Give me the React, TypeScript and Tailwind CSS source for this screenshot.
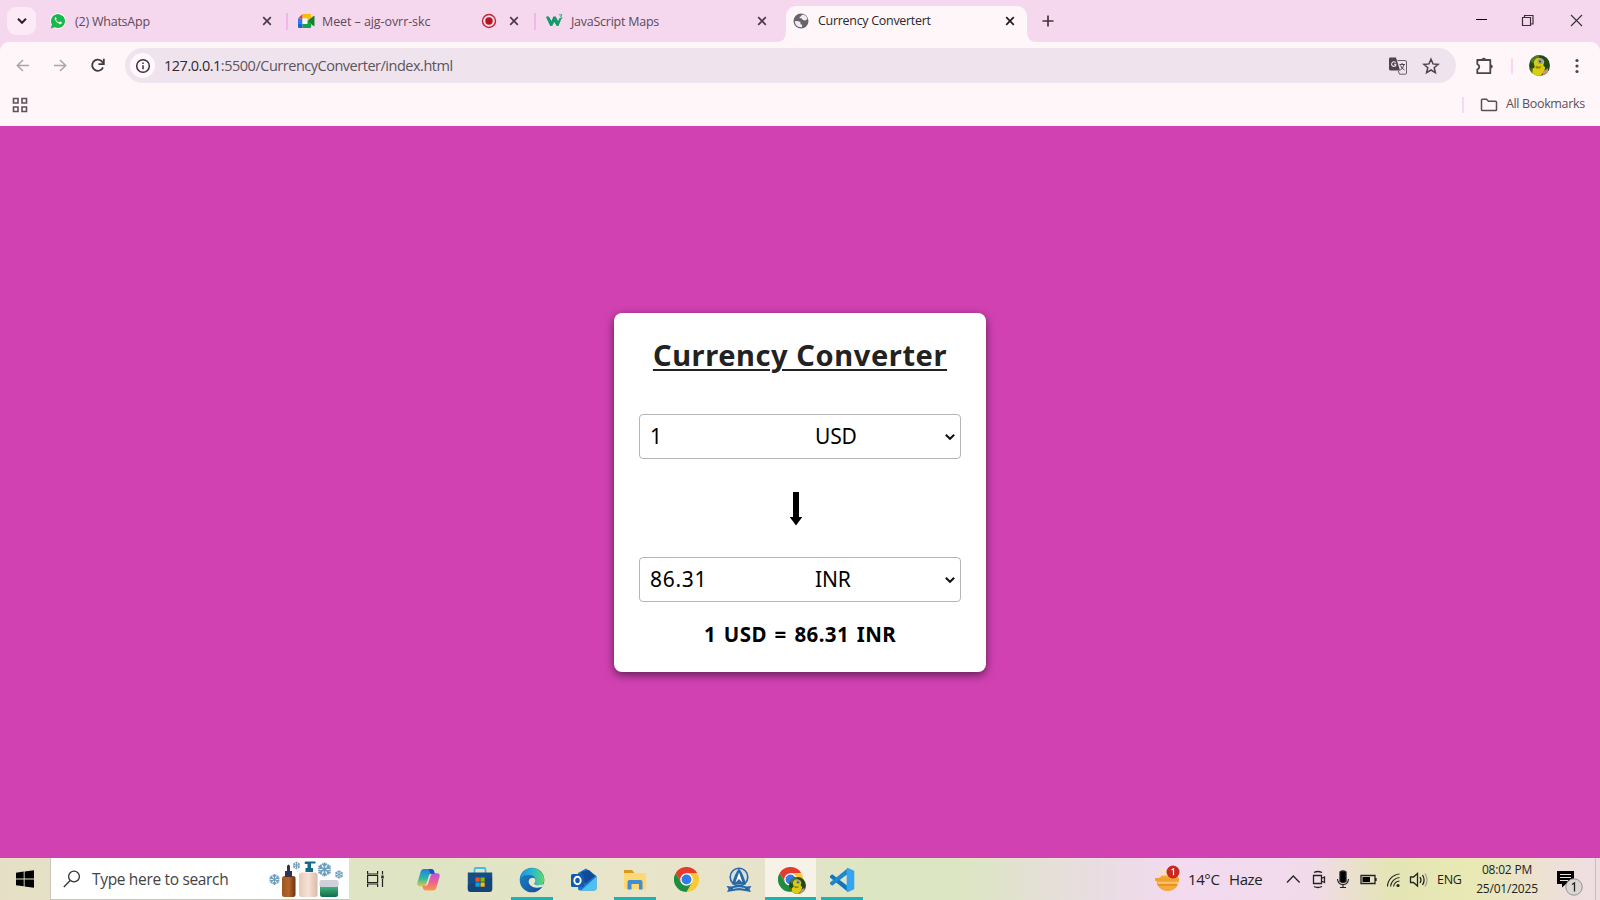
import type { ReactNode } from "react";

const UI = "font-['Open_Sans','Noto_Sans',sans-serif]";

function Close({ dark = false }: { dark?: boolean }) {
  return (
    <svg viewBox="0 0 16 16" className="block h-4 w-4 shrink-0">
      <path d="M4.2 4.2l7.6 7.6M11.8 4.2l-7.6 7.6" stroke={dark ? "#241a22" : "#4c3a48"} strokeWidth="1.7" fill="none" />
    </svg>
  );
}

function Chrome({ size = 25 }: { size?: number }) {
  return (
    <svg viewBox="0 0 48 48" width={size} height={size} className="block">
      <path d="M24 12H44.8A24 24 0 0 0 3.2 12L13.6 30Z" fill="#e33b2e" />
      <path d="M34.4 30 24 48A24 24 0 0 0 44.8 12H24Z" fill="#fcc934" />
      <path d="M13.6 30 3.2 12A24 24 0 0 0 24 48L34.4 30Z" fill="#1e8e3e" />
      <circle cx="24" cy="24" r="12" fill="#fff" />
      <circle cx="24" cy="24" r="9.5" fill="#2f7de9" />
    </svg>
  );
}

function Avatar({ size }: { size: number }) {
  return (
    <svg viewBox="0 0 22 22" width={size} height={size} className="block">
      <defs>
        <clipPath id="av">
          <circle cx="11" cy="11" r="11" />
        </clipPath>
      </defs>
      <g clipPath="url(#av)">
        <rect width="22" height="22" fill="#26491a" />
        <path d="M0 5l8-5h4L4 9z" fill="#4c7a2c" />
        <path d="M5 8q1-4.500 5-5 5 .5 6 4l-1 4 2 2-1 4-4 5H6L2 18l2-4 2-1z" fill="#dccb13" />
        <circle cx="12" cy="6.500" r="3" fill="#9fa38a" />
        <circle cx="11.500" cy="6.800" r="1.100" fill="#3e4a2a" />
        <path d="M7 11q3 2 6 .500l-1 2q-2 1.500-5 0z" fill="#8b8a0c" />
        <path d="M15 17l5-3v6l-6 2z" fill="#c9937a" />
        <path d="M0 13l4 2-1 7H0z" fill="#526c14" />
      </g>
    </svg>
  );
}

function Snow({ x, y, r }: { x: number; y: number; r: number }) {
  return (
    <g transform={`translate(${x} ${y}) scale(${r / 6})`} stroke="#6f9fbe" strokeWidth="1.500" fill="none">
      {[0, 60, 120].map((a) => (
        <path key={a} transform={`rotate(${a})`} d="M0-6V6M-2-5L0-3L2-5M-2 5L0 3L2 5" />
      ))}
    </g>
  );
}

function TabBar() {
  return (
    <div className="flex h-[42px] items-start bg-[#f6d8ee]">
      <div className="ml-[7px] mt-[7px] flex h-7 w-[29px] items-center justify-center rounded-[9px] bg-[#fdeaf7]">
        <svg viewBox="0 0 12 12" className="h-3 w-3">
          <path d="M2 3.800l4 4 4-4" stroke="#2b2029" strokeWidth="2" fill="none" />
        </svg>
      </div>
      <div className="mt-[7px] flex h-7 w-[250px] items-center pl-[14px]">
        <svg viewBox="0 0 16 16" className="h-4 w-4 shrink-0">
          <circle cx="8" cy="8" r="7.800" fill="#fff" />
          <path d="M.8 15.400l1.100-3.800A7 7 0 1 1 4.700 14.300z" fill="#19b84a" />
          <path d="M5.300 4.300q-.9.8-.4 2.300 1.300 3.500 4.800 4.600 1.500.2 2-.9.300-1-.1-1.200l-1.500-.7q-.4-.1-.7.300-.5.900-1 .6-1.600-.7-2.400-2.200-.1-.3.500-.9.200-.3 0-.6l-.6-1.300q-.2-.3-.6 0z" fill="#fff" />
        </svg>
        <span className="ml-[9px] w-[184px] pt-[2px] text-[12.500px] tracking-[-0.220px] text-[#5d4a59]">(2) WhatsApp</span>
        <Close />
      </div>
      <div className="mt-[13px] h-[17px] w-[2px] bg-[#f3b5ea]" />
      <div className="mt-[7px] flex h-7 w-[246px] items-center pl-[10px]">
        <svg viewBox="0 0 17 14" className="h-[14px] w-[17px] shrink-0">
          <path d="M0 4.500L4.500 0V4.500z" fill="#e2382c" />
          <path d="M4.500 0H12q1.200 0 1.200 1.200V6L9.500 7V4.500h-5z" fill="#fbbc04" />
          <path d="M0 4.500h4.500V10H0z" fill="#2b7cf0" />
          <path d="M4.500 4.500h5V10h-5z" fill="#fdf3fa" />
          <path d="M0 10h4.500v4H1.200Q0 14 0 12.800z" fill="#1a62d6" />
          <path d="M4.500 10h5V7l3.700 3v2.800q0 1.200-1.200 1.200H4.500z" fill="#18a047" />
          <path d="M9.500 7l6-5q1-.6 1 .5v9q0 1-1 .5z" fill="#118336" />
        </svg>
        <span className="ml-[7px] w-[152px] pt-[2px] text-[12.500px] tracking-[-0.080px] text-[#5d4a59]">Meet – ajg-ovrr-skc</span>
        <svg viewBox="0 0 16 16" className="mr-[9px] ml-[7px] h-4 w-4 shrink-0">
          <circle cx="8" cy="8" r="6.500" stroke="#b92a31" strokeWidth="1.400" fill="none" />
          <circle cx="8" cy="8" r="3.700" fill="#b3151d" />
        </svg>
        <Close />
      </div>
      <div className="mt-[13px] h-[17px] w-[2px] bg-[#f3b5ea]" />
      <div className="mt-[7px] flex h-7 w-[240px] items-center pl-[10px]">
        <svg viewBox="0 0 17 14" className="h-[14px] w-[17px] shrink-0">
          <path d="M0 3q1.500-1.500 3-.3L5.500 7l1.800-4.600h2.500L12 7l2-3.500 1.500 1-3 7.500h-1.800L8.300 8 6.200 12H4.200z" fill="#139a6d" />
          <path d="M13 .8h3l-1.500 1.700q1.700.2 1.500 1.500-.3 1.500-2.600.9" stroke="#35a680" fill="none" />
        </svg>
        <span className="ml-[8px] w-[183px] pt-[2px] text-[12.500px] tracking-[-0.250px] text-[#5d4a59]">JavaScript Maps</span>
        <Close />
      </div>
      <svg viewBox="0 0 10 10" className="mt-8 h-[10px] w-[10px] shrink-0">
        <path d="M0 10Q10 10 10 0V10z" fill="#fff6fa" />
      </svg>
      <div className="mt-[6px] flex h-9 w-[241px] items-center rounded-t-[10px] bg-[#fff6fa] pb-[6px] pl-[7px]">
        <svg viewBox="0 0 16 16" className="h-4 w-4 shrink-0">
          <circle cx="8" cy="8" r="7.500" fill="#66646a" />
          <path d="M9.200 1.800q-1 .2-1 1.400-1.900.1-1.700 1.900l2.300.3 1 1.700 2.400.3L14.500 6Q14 3 11 1.700zM2 8l4 .2 1.600 1.300-.2 1.400 1.800 1.100-.3 2.200Q3.500 14.500 2 10z" fill="#f4eaf1" />
          <path d="M11 9.500h3q-.8 2.500-2.600 3.500z" fill="#66646a" />
        </svg>
        <span className="ml-[9px] w-[184px] pt-px text-[12.500px] tracking-[-0.300px] text-[#2d262c]">Currency Convertert</span>
        <Close dark />
      </div>
      <svg viewBox="0 0 10 10" className="mt-8 h-[10px] w-[10px] shrink-0">
        <path d="M10 10Q0 10 0 0V10z" fill="#fff6fa" />
      </svg>
      <svg viewBox="0 0 16 16" className="mt-[13px] ml-[3px] h-4 w-4 shrink-0">
        <path d="M8 2.500v11M2.500 8h11" stroke="#46343f" strokeWidth="1.700" />
      </svg>
      <svg viewBox="0 0 120 16" className="mt-[13px] mr-[12px] ml-auto h-4 w-[120px] shrink-0" fill="none" stroke="#3a3038">
        <path d="M8 6.500h11" stroke="#000" />
        <path d="M54.500 4.500h8v8h-8zM56.500 4.500v-2h8.500v8.500h-2.500" strokeWidth="1.200" />
        <path d="M103 2l11 11M114 2l-11 11" strokeWidth="1.100" />
      </svg>
    </div>
  );
}

function Toolbar() {
  return (
    <div className="bg-[#f6d8ee]">
      <div className="flex h-[84px] flex-col rounded-t-[9px] bg-[#fff6fa] pt-[6px]">
        <div className="flex h-[35px] items-center">
          <svg viewBox="0 0 125 35" className="h-[35px] w-[125px] shrink-0" fill="none" strokeWidth="1.500">
            <path d="M29 17.500H17.500M23 12l-5.700 5.500L23 23M54 17.500h11.500M60 12l5.700 5.500L60 23" stroke="#aca2a9" />
            <path d="M103 19.300A5.600 5.600 0 1 1 101.500 13l1.500 2" stroke="#45373f" strokeWidth="1.800" />
            <path d="M103.800 10.800v5.300h-5.300" stroke="#45373f" strokeWidth="1.800" />
          </svg>
          <div className="flex h-[35px] w-[1331px] items-center rounded-full bg-[#efe4ed] pl-[5px]">
            <div className="flex h-[25px] w-[25px] items-center justify-center rounded-full bg-[#fff8fc]">
              <svg viewBox="0 0 16 16" className="h-4 w-4" fill="none" stroke="#3b2f38">
                <circle cx="8" cy="8" r="6.300" strokeWidth="1.500" />
                <path d="M8 7.200v4M8 4.500v1.500" strokeWidth="1.500" />
              </svg>
            </div>
            <span className="ml-[9px] pt-px text-[14.500px] tracking-[-0.480px] text-[#5d535c]">
              <span className="text-[#302a30]">127.0.0.1</span>:5500/CurrencyConverter/index.html
            </span>
            <svg viewBox="0 0 18 18" className="mr-[15px] ml-auto h-[18px] w-[18px]">
              <path d="M1 .5h6l4 13H2Q0 13.500 0 12V2Q0 .5 1 .5z" fill="#51434d" />
              <path d="M8.500 3.500H16q1.500 0 1.500 1.500v11q0 1.200-1.200 1.200H10.500L9.300 14" fill="none" stroke="#6b5f68" />
              <path d="M6.800 5.700Q5 4 3.200 5.500q-1.400 1.600 0 3.300Q5 10.200 6.800 8.500V7.300H5" stroke="#eee0eb" fill="none" strokeWidth="1.100" />
              <path d="M10.500 7.500h5.500M13 6v1.500M15 7.500q-.7 3.500-4 6M11.500 8.500q1 3 4 4.500" stroke="#54464f" fill="none" />
            </svg>
            <svg viewBox="0 0 18 18" className="mr-[16px] h-[18px] w-[18px]" fill="none" stroke="#51434d" strokeWidth="1.500">
              <path d="M9 2.200l2 4.700 5.100.5-3.900 3.300 1.200 5L9 13l-4.400 2.700 1.200-5L1.900 7.400 7 6.900z" />
            </svg>
          </div>
          <svg viewBox="0 0 20 20" className="ml-[19px] h-5 w-5" fill="none" stroke="#51434d" strokeWidth="1.800">
            <path d="M2.300 4H15.300V17.200H2.300V13.500q2-.9 2-2.700t-2-2.700z" strokeLinejoin="round" />
            <path d="M6.600 4Q6.600 1.700 8.800 1.700T11 4zM15.300 8.500Q17.800 8.500 17.800 10.600T15.300 12.700z" fill="#51434d" stroke="none" />
          </svg>
          <div className="ml-[16px] h-4 w-[2px] bg-[#fad8f1]" />
          <div className="ml-[16px]"><Avatar size={21} /></div>
          <svg viewBox="0 0 4 16" className="ml-[25px] h-4 w-1" fill="#51434d">
            <circle cx="2" cy="2.500" r="1.600" /><circle cx="2" cy="8" r="1.600" /><circle cx="2" cy="13.500" r="1.600" />
          </svg>
        </div>
        <div className="flex h-[43px] items-center">
          <svg viewBox="0 0 16 16" className="ml-3 h-4 w-4" fill="none" stroke="#5f5059" strokeWidth="1.600">
            <path d="M1.500 1.500h4.500V6H1.500zM10 1.500h4.500V6H10zM1.500 10h4.500v4.500H1.500zM10 10h4.500v4.500H10z" />
          </svg>
          <div className="ml-auto h-4 w-[2px] bg-[#fad8f1]" />
          <svg viewBox="0 0 18 14" className="ml-4 h-[14px] w-[18px]" fill="none" stroke="#5b4c56" strokeWidth="1.500">
            <path d="M1.500 2Q1.500 1.200 2.300 1.200H6.500l2 2h7q1 0 1 1v7.500q0 .9-.9.900H2.400q-.9 0-.9-.9z" />
          </svg>
          <span className="ml-2 w-[94px] text-[12.500px] tracking-[-0.350px] whitespace-nowrap text-[#5d4f59]">All Bookmarks</span>
        </div>
      </div>
    </div>
  );
}

function Field({ value, unit }: { value: string; unit: string }) {
  return (
    <div className="flex h-[45px] w-[322px] shrink-0 items-center rounded-[4px] border-[1.500px] border-[#b5b5b5] bg-white text-[21px] text-black">
      <span className="ml-[10px] w-[165px] tracking-[0.700px]">{value}</span>
      <span className="tracking-[-0.200px]">{unit}</span>
      <svg viewBox="0 0 12 8" className="mr-[4px] ml-auto h-2 w-3">
        <path d="M1.800 1.800L6 5.800l4.200-4" stroke="#111" strokeWidth="2" fill="none" />
      </svg>
    </div>
  );
}

function Card() {
  return (
    <div className="mt-px flex h-[359px] w-[372px] flex-col items-center rounded-[8px] bg-white pt-[22px] font-['Noto_Sans',sans-serif] shadow-[0_3px_10px_rgba(0,0,0,0.55)]">
      <h1 className="h-[79px] text-[29px] leading-[40px] font-bold tracking-[0.600px] whitespace-nowrap text-[#222] underline decoration-2 underline-offset-[3px]">
        Currency Converter
      </h1>
      <Field value="1" unit="USD" />
      <svg viewBox="0 0 14 34" className="mt-[33px] mr-[8px] mb-[31px] h-[34px] w-[14px] shrink-0">
        <path d="M4 0h6v25h3.300L7 33.500.7 25H4z" fill="#000" />
      </svg>
      <Field value="86.31" unit="INR" />
      <div className="mt-[17px] text-[20.500px] leading-[30px] font-bold tracking-[0.400px] [word-spacing:2px] whitespace-nowrap text-black">1 USD = 86.31 INR</div>
    </div>
  );
}

function TaskItem({ children, w, open = false, active = false }: { children: ReactNode; w: string; open?: boolean; active?: boolean }) {
  return (
    <div className={`flex h-[42px] shrink-0 flex-col items-center ${w} ${active ? "bg-[#f6f2e8]" : ""}`}>
      <div className="flex h-[39px] items-center pt-[4px]">{children}</div>
      <div className={`h-[3px] ${active ? "w-full" : "w-[42px]"} ${open ? "bg-[#1fb2b5]" : ""}`} />
    </div>
  );
}

function SearchArt() {
  return (
    <svg viewBox="0 0 76 40" className="h-10 w-[76px] shrink-0">
      <defs>
        <linearGradient id="br"><stop stopColor="#9d5520" /><stop offset=".5" stopColor="#b4662b" /><stop offset="1" stopColor="#6a3311" /></linearGradient>
        <linearGradient id="cr"><stop stopColor="#e5c9b7" /><stop offset=".5" stopColor="#f7e1d5" /><stop offset="1" stopColor="#dcb9a8" /></linearGradient>
        <linearGradient id="gr" x2="0" y2="1"><stop stopColor="#62d39b" /><stop offset="1" stopColor="#0d6e4a" /></linearGradient>
      </defs>
      <Snow x={5.5} y={20.5} r={5.5} />
      <Snow x={27.5} y={6.5} r={3.800} />
      <Snow x={55.5} y={10.5} r={7} />
      <Snow x={70} y={15.5} r={4.200} />
      <rect x="13" y="17" width="13.500" height="21" rx="2.500" fill="url(#br)" />
      <path d="M16 18v-6h2V7q1.500-3 3 0v5H23v6z" fill="#33334f" />
      <rect x="30" y="13.500" width="18.500" height="24.500" rx="2.500" fill="url(#cr)" />
      <path d="M36.500 13V9h2V5h-2.700V2.500H46.500V4.500H42v4.500h2V13z" fill="#126b86" />
      <rect x="51" y="22" width="18" height="16" rx="2.500" fill="url(#gr)" />
      <rect x="50.500" y="21" width="19" height="7" rx="2" fill="#cfd0d8" />
    </svg>
  );
}

function Taskbar() {
  return (
    <div className="flex h-[42px] items-start bg-[linear-gradient(90deg,#e6dfc6_0,#dfe4c4_22%,#dfe4c4_28%,#e8e5ca_38%,#e6e3ca_48%,#dde6c3_54%,#dde6c3_60%,#e8dde0_68%,#f3daf0_74%,#f1dbea_82%,#e4e5b4_87%,#e9e9b4_92%,#eedfdc_98%,#efdee1_100%)]">
      <div className="flex h-[42px] w-[50px] shrink-0 items-center justify-center">
        <svg viewBox="0 0 18 18" className="h-[18px] w-[18px]"><path d="M0 2.700L7.700 1.600V8.500H0zM8.600 1.500L18 .2V8.500H8.600zM0 9.400h7.700v6.900L0 15.300zM8.600 9.400H18v8.400L8.600 16.500z" /></svg>
      </div>
      <div className="flex h-[42px] w-[299px] shrink-0 items-center border-b border-l border-[#c4c7ba] bg-white pl-3">
        <svg viewBox="0 0 18 18" className="h-[18px] w-[18px]" fill="none" stroke="#333" strokeWidth="1.300"><circle cx="11" cy="6.500" r="5.400" /><path d="M7.200 10.500L.8 17" /></svg>
        <span className="ml-[11px] w-[177px] pt-[2px] text-[15.500px] tracking-[-0.330px] whitespace-nowrap text-[#444]">Type here to search</span>
        <SearchArt />
      </div>
      <div className="flex h-[42px] w-[53px] items-center justify-center">
        <svg viewBox="0 0 19 18" className="h-[18px] w-[19px]" fill="none" stroke="#222" strokeWidth="1.200"><path d="M1.600 1v3h10V1M1.600 17v-3h10v3M1.600 5.500h10v7h-10zM16.500 1v3.500M16.500 9v8" /><path d="M16.500 5.500v3" strokeWidth="2.400" /></svg>
      </div>
      <TaskItem w="w-[52px]">
        <svg viewBox="0 0 26 26" width="25" height="25">
          <defs>
            <linearGradient id="c1" x2="0" y2="1"><stop stopColor="#1f7fe0" /><stop offset=".55" stopColor="#2fb8a8" /><stop offset="1" stopColor="#e7c83c" /></linearGradient>
            <linearGradient id="c2" x2="0" y2="1"><stop stopColor="#b05be6" /><stop offset=".5" stopColor="#ee5f93" /><stop offset="1" stopColor="#fb9a46" /></linearGradient>
          </defs>
          <path d="M8 2h8q2 0 2.800 2.300L19.500 7H16q-2 0-2.600 2l-2.600 8.500Q10 20 7.500 20H4Q.6 20 1.500 16L5 4.500Q5.800 2 8 2z" fill="url(#c1)" />
          <path d="M18 24.500h-8q-2 0-2.800-2.300L6.500 19.500H10q2 0 2.600-2L15.200 9Q16 6.500 18.500 6.500H22q3.400 0 2.500 4L21 22q-.8 2.500-3 2.500z" fill="url(#c2)" />
          <path d="M13 2h3q2 0 2.800 2.300L19.500 7H15z" fill="#1d4fc0" />
        </svg>
      </TaskItem>
      <TaskItem w="w-[51px]">
        <svg viewBox="0 0 26 26" width="26" height="26">
          <path d="M7.500 6V2.500Q7.500 1 9 1h8q1.500 0 1.500 1.500V6" stroke="#46bde0" strokeWidth="1.800" fill="none" />
          <path d="M.8 5.500h24.400V22q0 3-3 3H3.800q-3 0-3-3z" fill="#174d86" /><path d="M.8 18l24.400-8V22q0 3-3 3H3.800q-3 0-3-3z" fill="#143f70" opacity=".6" />
          <path d="M8.500 10.500h4.200v4.200H8.500z" fill="#f25022" /><path d="M13.500 10.500h4.200v4.200h-4.200z" fill="#7fba00" /><path d="M8.500 15.500h4.200v4.200H8.500z" fill="#00a4ef" /><path d="M13.500 15.500h4.200v4.200h-4.200z" fill="#ffb900" />
        </svg>
      </TaskItem>
      <TaskItem w="w-[53px]" open>
        <svg viewBox="0 0 26 26" width="26" height="26">
          <defs>
            <linearGradient id="e1"><stop stopColor="#1f8fdc" /><stop offset=".5" stopColor="#2ab7cf" /><stop offset="1" stopColor="#62d86a" /></linearGradient>
            <linearGradient id="e2" x2="1" y2="1"><stop stopColor="#1b87cc" /><stop offset="1" stopColor="#134a92" /></linearGradient>
          </defs>
          <circle cx="13" cy="13" r="12.300" fill="url(#e2)" />
          <path d="M.8 12A12.300 12.300 0 0 1 25.300 12.500q0 5.800-6 5.800-4.300 0-4.300-1.800 1.700-1 1.700-3.300Q16 8 9.500 8 3.500 8 .8 12z" fill="url(#e1)" />
          <path d="M11 11.500Q8 15 11.500 18.500q4.500 4 12 1.200l1.500-3.200q-2 1.800-5.700 1.800-4.300 0-4.300-1.800 1.700-1 1.500-3.500-.8-3.500-5.500-1.500z" fill="#e9e8cf" />
        </svg>
      </TaskItem>
      <TaskItem w="w-[51px]">
        <svg viewBox="0 0 26 26" width="26" height="26">
          <path d="M7 6L15 1.500 25.500 9V21q0 2.500-2.500 2.500H9q-2 0-2-2z" fill="#1c74c9" />
          <path d="M10 5l8-2 6 6-10 8z" fill="#114b97" /><path d="M25.500 9.500V21q0 2.500-2.500 2.500H10z" fill="#4cc0f2" />
          <rect y="7" width="13" height="13" rx="1.500" fill="#0f5bb0" /><ellipse cx="6.500" cy="13.500" rx="3.200" ry="3.700" fill="none" stroke="#fff" strokeWidth="1.900" />
        </svg>
      </TaskItem>
      <TaskItem w="w-[52px]" open>
        <svg viewBox="0 0 24 22" width="24" height="22">
          <path d="M1 1h8l2.500 3H1z" fill="#d99a1c" /><path d="M1 4h21q1 0 1 1v14q0 1-1 1H1z" fill="#ffd873" /><path d="M4.500 20.500V13q0-2 2-2h11q2 0 2 2v7.500H16V15H8.500v5.500z" fill="#3f8fd0" />
        </svg>
      </TaskItem>
      <TaskItem w="w-[51px]"><Chrome /></TaskItem>
      <TaskItem w="w-[53px]">
        <svg viewBox="0 0 26 26" width="26" height="26" fill="none" stroke="#2868a6">
          <circle cx="13" cy="10" r="8.800" strokeWidth="1.600" fill="#d5e0da" /><path d="M13 1.500q-4.500 5-7 16h14Q17.500 7 13 1.500z" fill="#2868a6" stroke="none" /><path d="M13 5.500q-1.500 4-3.500 10l3.500-3.500 3.500 3.500q-2-6-3.500-10z" fill="#fff" stroke="none" />
          <path d="M.5 19l5 .5q7.500-3 15 0l5-.5-2 3 1.500 3-6-1q-6-1.500-12 0l-6 1 1.500-3z" fill="#2868a6" stroke="none" /><path d="M7 21.500q6-2 12 0" stroke="#dfe8e4" strokeWidth=".8" />
        </svg>
      </TaskItem>
      <TaskItem w="w-[51px]" open active>
        <div className="relative">
          <Chrome />
          <div className="absolute top-[10px] left-[11px]"><Avatar size={17} /></div>
        </div>
      </TaskItem>
      <TaskItem w="w-[52px]" open>
        <svg viewBox="0 0 26 26" width="26" height="26">
          <path d="M1 9l2.200-1.800 15.800 12V25L1 10.500z" fill="#0d76bd" /><path d="M1 17l2.200 1.800L19 6.800V1L1 15.500z" fill="#1f87d0" /><path d="M18.500.7l6 2.800q.8.400.8 1.300v16.400q0 .9-.8 1.300l-6 2.800-.8-1.300V2z" fill="#36a4ee" />
        </svg>
      </TaskItem>
      <svg viewBox="0 0 26 26" className="mt-[7px] ml-[287px] h-[26px] w-[26px] shrink-0">
        <path d="M1.500 15A11 11 0 0 0 23.800 15L22 9H9z" fill="#f6a93a" />
        <path d="M5 4.500h8v2H5zM3.500 8.500h10v2h-10z" fill="#f9e3b4" />
        <path d="M0 13h24v2.800H0z" fill="#f3a12b" /><path d="M3 17.500h20v1.300H3z" fill="#fde0a5" /><path d="M2 18.800h20v2H3z" fill="#e78d22" />
        <circle cx="18" cy="7" r="6.500" fill="#c8281f" /><path d="M16.500 5l2-1.200V10.300" stroke="#fff" fill="none" strokeWidth="1.200" />
      </svg>
      <span className="ml-[7px] w-[41px] text-[15px] leading-[42px] tracking-[-0.400px] whitespace-nowrap text-[#222]">14°C</span>
      <span className="w-[56px] text-[15px] leading-[42px] tracking-[-0.400px] text-[#222]">Haze</span>
      <svg viewBox="0 0 145 42" className="h-[42px] w-[145px] shrink-0" fill="none" stroke="#222" strokeWidth="1.300">
        <path d="M2 24.500l6.300-6.500 6.300 6.500" />
        <path d="M28.500 17.500h8v8h-8zM36.500 20.500l3-1.500v5.500l-3-1.500M29 14.500q3.500-2 8 0M29 28.500q3.500 2 8 0" />
        <path d="M55 14q3-2 6 0v9.500q-3 2-6 0z" fill="#000" /><path d="M52.500 21q.5 5.500 5.500 5.500t5.500-5.500M58 27v3M55 29.500h6" strokeWidth="1.100" />
        <path d="M76 17.500h14v8H76zM91 20v3" /><path d="M77.500 19h7.500v5h-7.500z" fill="#000" stroke="none" />
        <path d="M102.500 28.500A13 13 0 0 1 114.500 16M105.500 28.500A10 10 0 0 1 114.500 19.500M108.500 28.500A7 7 0 0 1 114.500 23" strokeWidth="1.100" /><circle cx="113" cy="27.500" r="1.600" fill="#222" stroke="none" />
        <path d="M125.500 19h3l4-3.500v12.500l-4-3.500h-3zM135 19q2 3 0 6M137.500 17q3.200 5 0 10" /><path d="M140 15.500q4 6.500 0 13" stroke="#a5a591" />
      </svg>
      <span className="ml-[7px] w-[35px] text-[12.500px] leading-[43px] tracking-[-0.300px] text-[#222]">ENG</span>
      <div className="flex w-[70px] flex-col items-center pt-[2px] text-[12px] leading-[19px] tracking-[-0.200px] whitespace-nowrap text-[#222]"><span>08:02 PM</span><span>25/01/2025</span></div>
      <svg viewBox="0 0 28 28" className="mt-3 ml-[15px] h-7 w-7 shrink-0">
        <path d="M0 1h17v13H9l-4 3.500V14H0z" fill="#000" /><path d="M3 4.500h11M3 7.500h11M3 10.500h8" stroke="#eddfd8" strokeWidth="1.200" />
        <circle cx="17" cy="17" r="8.200" fill="#d9d6d4" stroke="#969494" /><path d="M15 14.500l2.500-1.500v8.500" stroke="#222" strokeWidth="1.300" fill="none" />
      </svg>
      <div className="ml-[10px] h-[42px] w-px bg-[#c9bfc0]" />
    </div>
  );
}

export default function App() {
  return (
    <div className={`flex h-[900px] w-[1600px] flex-col overflow-hidden ${UI}`}>
      <TabBar />
      <Toolbar />
      <main className="flex h-[732px] items-center justify-center bg-[#d141b2]">
        <Card />
      </main>
      <Taskbar />
    </div>
  );
}
